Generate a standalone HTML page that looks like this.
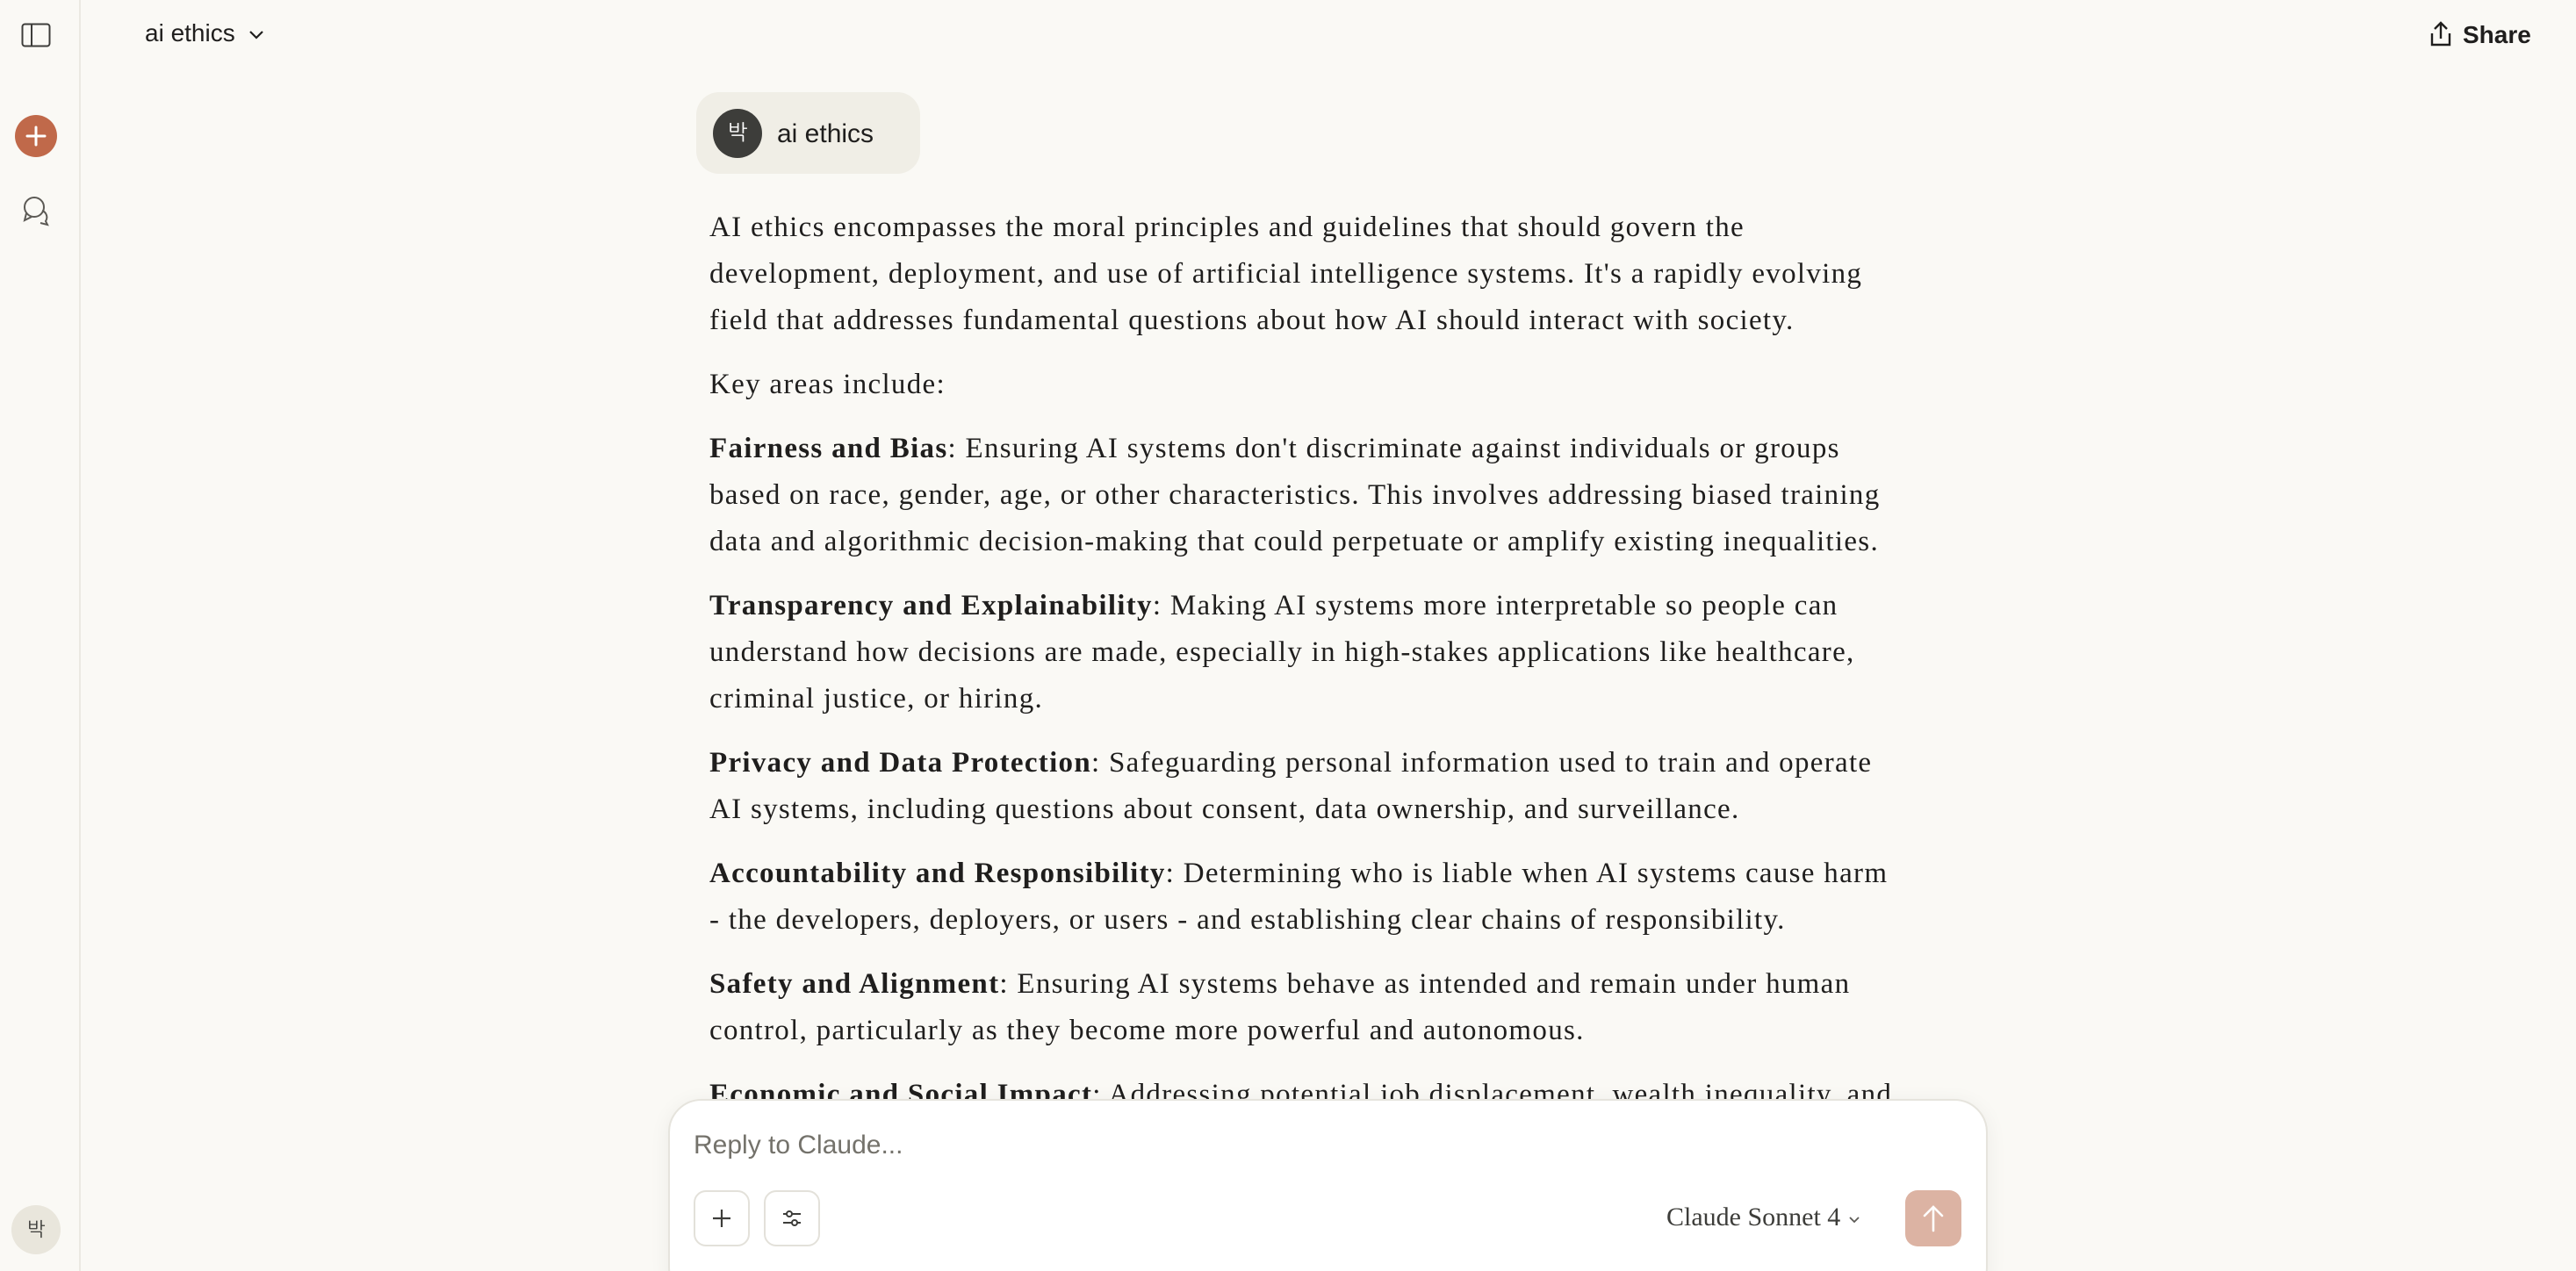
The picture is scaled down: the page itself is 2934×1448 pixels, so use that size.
<!DOCTYPE html>
<html><head><meta charset="utf-8"><style>
*{margin:0;padding:0;box-sizing:border-box}
html{width:2934px;height:1448px;overflow:hidden}
body{width:2934px;height:1448px;overflow:hidden;background:#faf9f5;font-family:"Liberation Sans",sans-serif;color:#1f1e1d;position:relative}
.side{position:absolute;left:0;top:0;width:92px;height:1448px;border-right:2px solid #ebe9e2;background:#faf9f5}
.abs{position:absolute}
.title{left:165px;top:22px;font-size:28px;color:#1f1e1d}
.bubble{left:793px;top:105px;width:255px;height:93px;background:#f0eee6;border-radius:26px}
.bav{left:812px;top:124px;width:56px;height:56px;border-radius:50%;background:#3d3d3a;color:#fff;font-family:"Liberation Sans","NanumGothic",sans-serif;font-size:24px;text-align:center;line-height:56px}
.btxt{left:885px;top:136px;font-size:30px}
.content{left:808px;top:233px;font-family:"Liberation Serif",serif;font-size:33px;line-height:53px;color:#1f1e1d;white-space:nowrap;letter-spacing:1.3px}
.content p{margin-bottom:20px}
.content span{display:block}
.box{left:761px;top:1252px;width:1503px;height:230px;background:#fff;border:2px solid #e6e4dd;border-radius:38px;box-shadow:0 4px 24px rgba(0,0,0,0.06)}
.ph{left:790px;top:1288px;font-size:30px;color:#74726b}
.btn{top:1356px;width:64px;height:64px;border:2px solid #e3e1da;border-radius:14px;background:#fff}
.model{left:1898px;top:1370px;font-family:"Liberation Serif",serif;font-size:30px;color:#3d3d3a}
.send{left:2170px;top:1356px;width:64px;height:64px;border-radius:14px;background:#dcb3a3}
</style></head><body>
<div class="side">
<svg class="abs" style="left:24px;top:26px" width="34" height="28" viewBox="0 0 34 28"><rect x="1.5" y="1.5" width="31" height="25" rx="3" fill="none" stroke="#3d3d3a" stroke-width="2"/><line x1="12" y1="2" x2="12" y2="26" stroke="#3d3d3a" stroke-width="2"/></svg>
<div class="abs" style="left:17px;top:131px;width:48px;height:48px;border-radius:50%;background:#c0694a"></div>
<svg class="abs" style="left:17px;top:131px" width="48" height="48"><path d="M24 14v20M14 24h20" stroke="#fff" stroke-width="3" stroke-linecap="round"/></svg>
<svg class="abs" style="left:24px;top:222px" width="36" height="36" viewBox="0 0 36 36" fill="none" stroke="#5c5a55" stroke-width="2"><circle cx="15" cy="14" r="11"/><path d="M6 21 L4 29 L12 25"/><path d="M24 18 a8 8 0 0 1 4 12 l2 4 -8 -2"/></svg>
<div class="abs" style="left:13px;top:1373px;width:56px;height:56px;border-radius:50%;background:#e9e6dc;font-family:'Liberation Sans','NanumGothic',sans-serif;font-size:22px;text-align:center;line-height:56px;color:#3d3d3a">박</div>
</div>
<div class="abs title">ai ethics <svg width="20" height="14" style="margin-left:6px" viewBox="0 0 20 14"><path d="M3 3l7 7 7-7" fill="none" stroke="#1f1e1d" stroke-width="2.2"/></svg></div>
<svg class="abs" style="left:2766px;top:23px" width="28" height="32" viewBox="0 0 28 32" fill="none" stroke="#1f1e1d" stroke-width="2.4"><path d="M14 3v18M7 10l7-7 7 7M4 15v13h20V15"/></svg>
<div class="abs" style="left:2805px;top:24px;font-size:28px;font-weight:bold;color:#1f1e1d">Share</div>
<div class="abs bubble"></div>
<div class="abs bav">박</div>
<div class="abs btxt">ai ethics</div>
<div class="abs content">
<p><span>AI ethics encompasses the moral principles and guidelines that should govern the</span><span>development, deployment, and use of artificial intelligence systems. It's a rapidly evolving</span><span>field that addresses fundamental questions about how AI should interact with society.</span></p>
<p><span>Key areas include:</span></p>
<p><span><b>Fairness and Bias</b>: Ensuring AI systems don't discriminate against individuals or groups</span><span>based on race, gender, age, or other characteristics. This involves addressing biased training</span><span>data and algorithmic decision-making that could perpetuate or amplify existing inequalities.</span></p>
<p><span><b>Transparency and Explainability</b>: Making AI systems more interpretable so people can</span><span>understand how decisions are made, especially in high-stakes applications like healthcare,</span><span>criminal justice, or hiring.</span></p>
<p><span><b>Privacy and Data Protection</b>: Safeguarding personal information used to train and operate</span><span>AI systems, including questions about consent, data ownership, and surveillance.</span></p>
<p><span><b>Accountability and Responsibility</b>: Determining who is liable when AI systems cause harm</span><span>- the developers, deployers, or users - and establishing clear chains of responsibility.</span></p>
<p><span><b>Safety and Alignment</b>: Ensuring AI systems behave as intended and remain under human</span><span>control, particularly as they become more powerful and autonomous.</span></p>
<p><span><b>Economic and Social Impact</b>: Addressing potential job displacement, wealth inequality, and</span></p>
</div>
<div class="abs box"></div>
<div class="abs ph">Reply to Claude...</div>
<div class="abs btn" style="left:790px"><svg width="60" height="60"><path d="M30 20v20M20 30h20" stroke="#3d3d3a" stroke-width="2.2"/></svg></div>
<div class="abs btn" style="left:870px"><svg width="60" height="60" fill="none" stroke="#3d3d3a" stroke-width="2"><path d="M20 25h20M20 35h20"/><circle cx="27" cy="25" r="3" fill="#fff"/><circle cx="33" cy="35" r="3" fill="#fff"/></svg></div>
<div class="abs model">Claude Sonnet 4 <svg width="16" height="12" viewBox="0 0 16 12"><path d="M3 3l5 5 5-5" fill="none" stroke="#5c5a55" stroke-width="1.8"/></svg></div>
<div class="abs send"><svg width="64" height="64"><path d="M32 46V19M22 29l10-10 10 10" fill="none" stroke="#fff" stroke-width="2.6" stroke-linecap="round"/></svg></div>
</body></html>
